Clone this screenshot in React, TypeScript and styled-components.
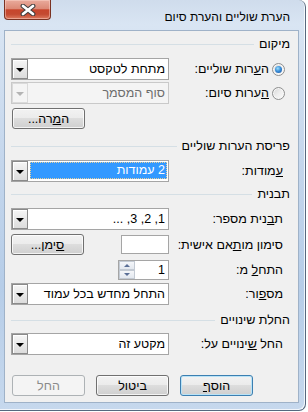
import React from "react";
import styled, { createGlobalStyle } from "styled-components";

const GlobalStyle = createGlobalStyle`
  html, body {
    margin: 0;
    padding: 0;
    background: #ffffff;
  }
  body {
    width: 308px;
    height: 412px;
    overflow: hidden;
    font-family: "Liberation Sans", Arial, sans-serif;
    font-size: 12px;
    color: #000;
  }
`;

const App = () => {
  return (
    <>
      <GlobalStyle />
      <Window>
        <TitleBar>
          <CloseButton>
            <svg width="16" height="12" viewBox="0 0 16 12">
              <path d="M3 2 L13 10 M13 2 L3 10" stroke="#3d3d3d" strokeWidth="4.8" strokeLinecap="round" fill="none" />
              <path d="M3 2 L13 10 M13 2 L3 10" stroke="#ffffff" strokeWidth="2.8" strokeLinecap="round" fill="none" />
            </svg>
          </CloseButton>
          <Title>הערת שוליים והערת סיום</Title>
        </TitleBar>

        <Client>
          <GroupHeader>
            <span>מיקום</span>
            <Line />
          </GroupHeader>

          <Row $mt={7} $pr={5}>
            <RadioLabel>
              <Radio $checked />
              <span>ה<u>ע</u>רות שוליים:</span>
            </RadioLabel>
            <ComboBox>
              <DropButton><Arrow /></DropButton>
              <ComboText>מתחת לטקסט</ComboText>
            </ComboBox>
          </Row>

          <Row $mt={2} $pr={5}>
            <RadioLabel>
              <Radio />
              <span><u>ה</u>ערות סיום:</span>
            </RadioLabel>
            <ComboBox $disabled>
              <DropButton $disabled><Arrow $disabled /></DropButton>
              <ComboText $disabled>סוף המסמך</ComboText>
            </ComboBox>
          </Row>

          <ButtonRow $mt={4}>
            <Button>ה<u>מ</u>רה...</Button>
          </ButtonRow>

          <GroupHeader $mt={10}>
            <span>פריסת הערות שוליים</span>
            <Line />
          </GroupHeader>

          <Row $mt={7}>
            <Label><u>ע</u>מודות:</Label>
            <ComboBox>
              <DropButton><Arrow /></DropButton>
              <ComboText $selected>2 עמודות</ComboText>
            </ComboBox>
          </Row>

          <GroupHeader $mt={5}>
            <span>תבנית</span>
            <Line />
          </GroupHeader>

          <Row $mt={7}>
            <Label>ת<u>ב</u>נית מספר:</Label>
            <ComboBox>
              <DropButton><Arrow /></DropButton>
              <ComboText>1, 2, 3, ...</ComboText>
            </ComboBox>
          </Row>

          <Row $mt={4} $h={21}>
            <Label>סימון מו<u>ת</u>אם אישית:</Label>
            <ControlSlot $justify="space-between">
              <Button>
                <u>ס</u>ימן...
              </Button>
              <TextBox />
            </ControlSlot>
          </Row>

          <Row $mt={5} $h={20}>
            <Label>התח<u>ל</u> מ:</Label>
            <ControlSlot $justify="flex-end">
              <Spinner>
                <SpinButtons>
                  <SpinHalf><SpinArrow $up /></SpinHalf>
                  <SpinHalf><SpinArrow /></SpinHalf>
                </SpinButtons>
                <SpinValue>1</SpinValue>
              </Spinner>
            </ControlSlot>
          </Row>

          <Row $mt={3}>
            <Label>מס<u>פ</u>ור:</Label>
            <ComboBox>
              <DropButton><Arrow /></DropButton>
              <ComboText>התחל מחדש בכל עמוד</ComboText>
            </ComboBox>
          </Row>

          <GroupHeader $mt={8}>
            <span>החלת שינויים</span>
            <Line />
          </GroupHeader>

          <Row $mt={6}>
            <Label>החל <u>ש</u>ינויים על:</Label>
            <ComboBox>
              <DropButton><Arrow /></DropButton>
              <ComboText>מקטע זה</ComboText>
            </ComboBox>
          </Row>

          <ButtonBar>
            <Button $variant="disabled">החל</Button>
            <Button>ביטול</Button>
            <Button $variant="default">הוס<u>ף</u></Button>
          </ButtonBar>
        </Client>
      </Window>
    </>
  );
};

export default App;

const Window = styled.div`
  box-sizing: border-box;
  width: 306px;
  height: 411px;
  display: flex;
  flex-direction: column;
  border: 1px solid #56697f;
  border-top: none;
  border-left: none;
  border-radius: 0 7px 7px 0;
  background: linear-gradient(180deg, #cfdcec 0%, #d9e5f3 6%, #c4d6ec 40%, #b6cde8 70%, #c6d8ed 100%);
  box-shadow: inset -1px -1px 0 rgba(255, 255, 255, 0.75);
`;

const TitleBar = styled.div`
  height: 30px;
  flex: none;
  display: flex;
  justify-content: space-between;
  align-items: flex-start;
  padding: 0 15px 0 4px;
`;

const CloseButton = styled.div`
  box-sizing: border-box;
  width: 47px;
  height: 20px;
  display: flex;
  align-items: center;
  justify-content: center;
  border: 1px solid #7a3222;
  border-top: none;
  border-radius: 0 0 4px 4px;
  background: linear-gradient(180deg, #e9ab9c 0%, #dc8a77 45%, #c7452c 52%, #c44a31 75%, #dd7a5f 100%);
  box-shadow: inset 0 0 0 1px rgba(255, 220, 210, 0.45);
`;

const Title = styled.div`
  margin-top: 10px;
  line-height: 14px;
  font-size: 12px;
  direction: rtl;
  color: #000;
`;

const Client = styled.div`
  flex: 1;
  margin: 0 6px 7px 4px;
  border: 1px solid #9fb2c8;
  background: #f0f0f0;
  padding: 6px 8px 0 6px;
  display: flex;
  flex-direction: column;
  direction: rtl;
  font-size: 12.5px;

  u {
    text-decoration: underline;
    text-underline-offset: 1px;
  }
`;

const GroupHeader = styled.div<{ $mt?: number }>`
  height: 14px;
  margin-top: ${(p) => p.$mt ?? 0}px;
  display: flex;
  align-items: center;
  gap: 5px;
  line-height: 14px;
  white-space: nowrap;
`;

const Line = styled.div`
  flex: 1;
  height: 1px;
  background: #d5dfe5;
`;

const Row = styled.div<{ $mt?: number; $pr?: number; $h?: number }>`
  height: ${(p) => p.$h ?? 22}px;
  margin-top: ${(p) => p.$mt ?? 0}px;
  padding-right: ${(p) => p.$pr ?? 7}px;
  display: flex;
  align-items: center;
  justify-content: space-between;
`;

const Label = styled.span`
  white-space: nowrap;
  line-height: 14px;
`;

const RadioLabel = styled.label`
  display: flex;
  align-items: center;
  gap: 3px;
  white-space: nowrap;
  line-height: 14px;
`;

const Radio = styled.span<{ $checked?: boolean }>`
  box-sizing: border-box;
  position: relative;
  width: 13px;
  height: 13px;
  border-radius: 50%;
  border: 1px solid #8e8f8f;
  background: linear-gradient(135deg, #d4d4d4 0%, #eeeeee 50%, #fbfbfb 100%);
  box-shadow: inset 0 0 0 1px #f7f7f7;

  &::after {
    content: "";
    display: ${(p) => (p.$checked ? "block" : "none")};
    position: absolute;
    left: 2px;
    top: 2px;
    width: 7px;
    height: 7px;
    border-radius: 50%;
    background: radial-gradient(circle at 40% 35%, #9ee0fb 0%, #3b8fd9 45%, #1b4f9a 100%);
  }
`;

const ComboBox = styled.div<{ $disabled?: boolean }>`
  box-sizing: border-box;
  width: 158px;
  height: 22px;
  display: flex;
  direction: ltr;
  border: 1px solid ${(p) => (p.$disabled ? "#c9c9c9" : "#a5a5a5")};
  background: ${(p) => (p.$disabled ? "#f4f4f4" : "#ffffff")};
`;

const DropButton = styled.div<{ $disabled?: boolean }>`
  box-sizing: border-box;
  width: 16px;
  flex: none;
  display: flex;
  align-items: center;
  justify-content: center;
  border: 1px solid ${(p) => (p.$disabled ? "#dadada" : "#8a8a8a")};
  background: ${(p) =>
    p.$disabled ? "#f4f4f4" : "linear-gradient(180deg, #f6f6f6 0%, #e9e9e9 50%, #dcdcdc 100%)"};
  box-shadow: ${(p) => (p.$disabled ? "none" : "inset 1px 1px 0 #ffffff")};
`;

const Arrow = styled.span<{ $disabled?: boolean }>`
  width: 0;
  height: 0;
  border-left: 4px solid transparent;
  border-right: 4px solid transparent;
  border-top: 4px solid ${(p) => (p.$disabled ? "#b4b4b4" : "#000000")};
  margin-top: 1px;
`;

const ComboText = styled.div<{ $disabled?: boolean; $selected?: boolean }>`
  box-sizing: border-box;
  flex: 1;
  direction: rtl;
  text-align: right;
  white-space: nowrap;
  overflow: hidden;
  color: ${(p) => (p.$disabled ? "#6d6d6d" : p.$selected ? "#ffffff" : "#000000")};
  background: ${(p) => (p.$selected ? "#3399ff" : "transparent")};
  margin: ${(p) => (p.$selected ? "1px 1px 2px 2px" : "0")};
  border: ${(p) => (p.$selected ? "1px dotted #e8cf9a" : "none")};
  padding-right: ${(p) => (p.$selected ? "1px" : "3px")};
  line-height: ${(p) => (p.$selected ? "15px" : "20px")};
`;

const ControlSlot = styled.div<{ $justify: string }>`
  width: 158px;
  height: 100%;
  display: flex;
  direction: ltr;
  align-items: center;
  justify-content: ${(p) => p.$justify};
`;

const TextBox = styled.div`
  box-sizing: border-box;
  width: 48px;
  height: 19px;
  border: 1px solid #a5a5a5;
  background: #ffffff;
`;

const Spinner = styled.div`
  box-sizing: border-box;
  width: 51px;
  height: 20px;
  display: flex;
  border: 1px solid #a5a5a5;
  background: #ffffff;
`;

const SpinButtons = styled.div`
  width: 16px;
  display: flex;
  flex-direction: column;
`;

const SpinHalf = styled.div`
  box-sizing: border-box;
  flex: 1;
  display: flex;
  align-items: center;
  justify-content: center;
  border: 1px solid #c3cad3;
  background: linear-gradient(180deg, #f4f6f9 0%, #e3e8ef 100%);
`;

const SpinArrow = styled.span<{ $up?: boolean }>`
  width: 0;
  height: 0;
  border-left: 3px solid transparent;
  border-right: 3px solid transparent;
  ${(p) => (p.$up ? "border-bottom: 3px solid #5a6f96;" : "border-top: 3px solid #5a6f96;")}
`;

const SpinValue = styled.div`
  flex: 1;
  text-align: right;
  padding-right: 3px;
  line-height: 18px;
`;

const ButtonRow = styled.div<{ $mt?: number }>`
  margin-top: ${(p) => p.$mt ?? 0}px;
  display: flex;
  direction: ltr;
  padding-left: 1px;
`;

const ButtonBar = styled.div`
  margin-top: 20px;
  display: flex;
  direction: ltr;
  gap: 11px;
  padding-left: 1px;
`;

const Button = styled.div<{ $variant?: "default" | "disabled" }>`
  box-sizing: border-box;
  width: 73px;
  height: 21px;
  display: flex;
  align-items: center;
  justify-content: center;
  direction: rtl;
  white-space: nowrap;
  border-radius: 3px;
  border: 1px solid
    ${(p) => (p.$variant === "default" ? "#3c7fb1" : p.$variant === "disabled" ? "#adb2b5" : "#707070")};
  color: ${(p) => (p.$variant === "disabled" ? "#8a8a8a" : "#000000")};
  background: ${(p) =>
    p.$variant === "disabled"
      ? "#f4f4f4"
      : "linear-gradient(180deg, #f2f2f2 0%, #ebebeb 49%, #dddddd 50%, #cfcfcf 100%)"};
  box-shadow: ${(p) =>
    p.$variant === "default"
      ? "inset 0 0 0 1px #b9e3f7"
      : p.$variant === "disabled"
      ? "none"
      : "inset 0 0 0 1px rgba(255, 255, 255, 0.75)"};
`;
